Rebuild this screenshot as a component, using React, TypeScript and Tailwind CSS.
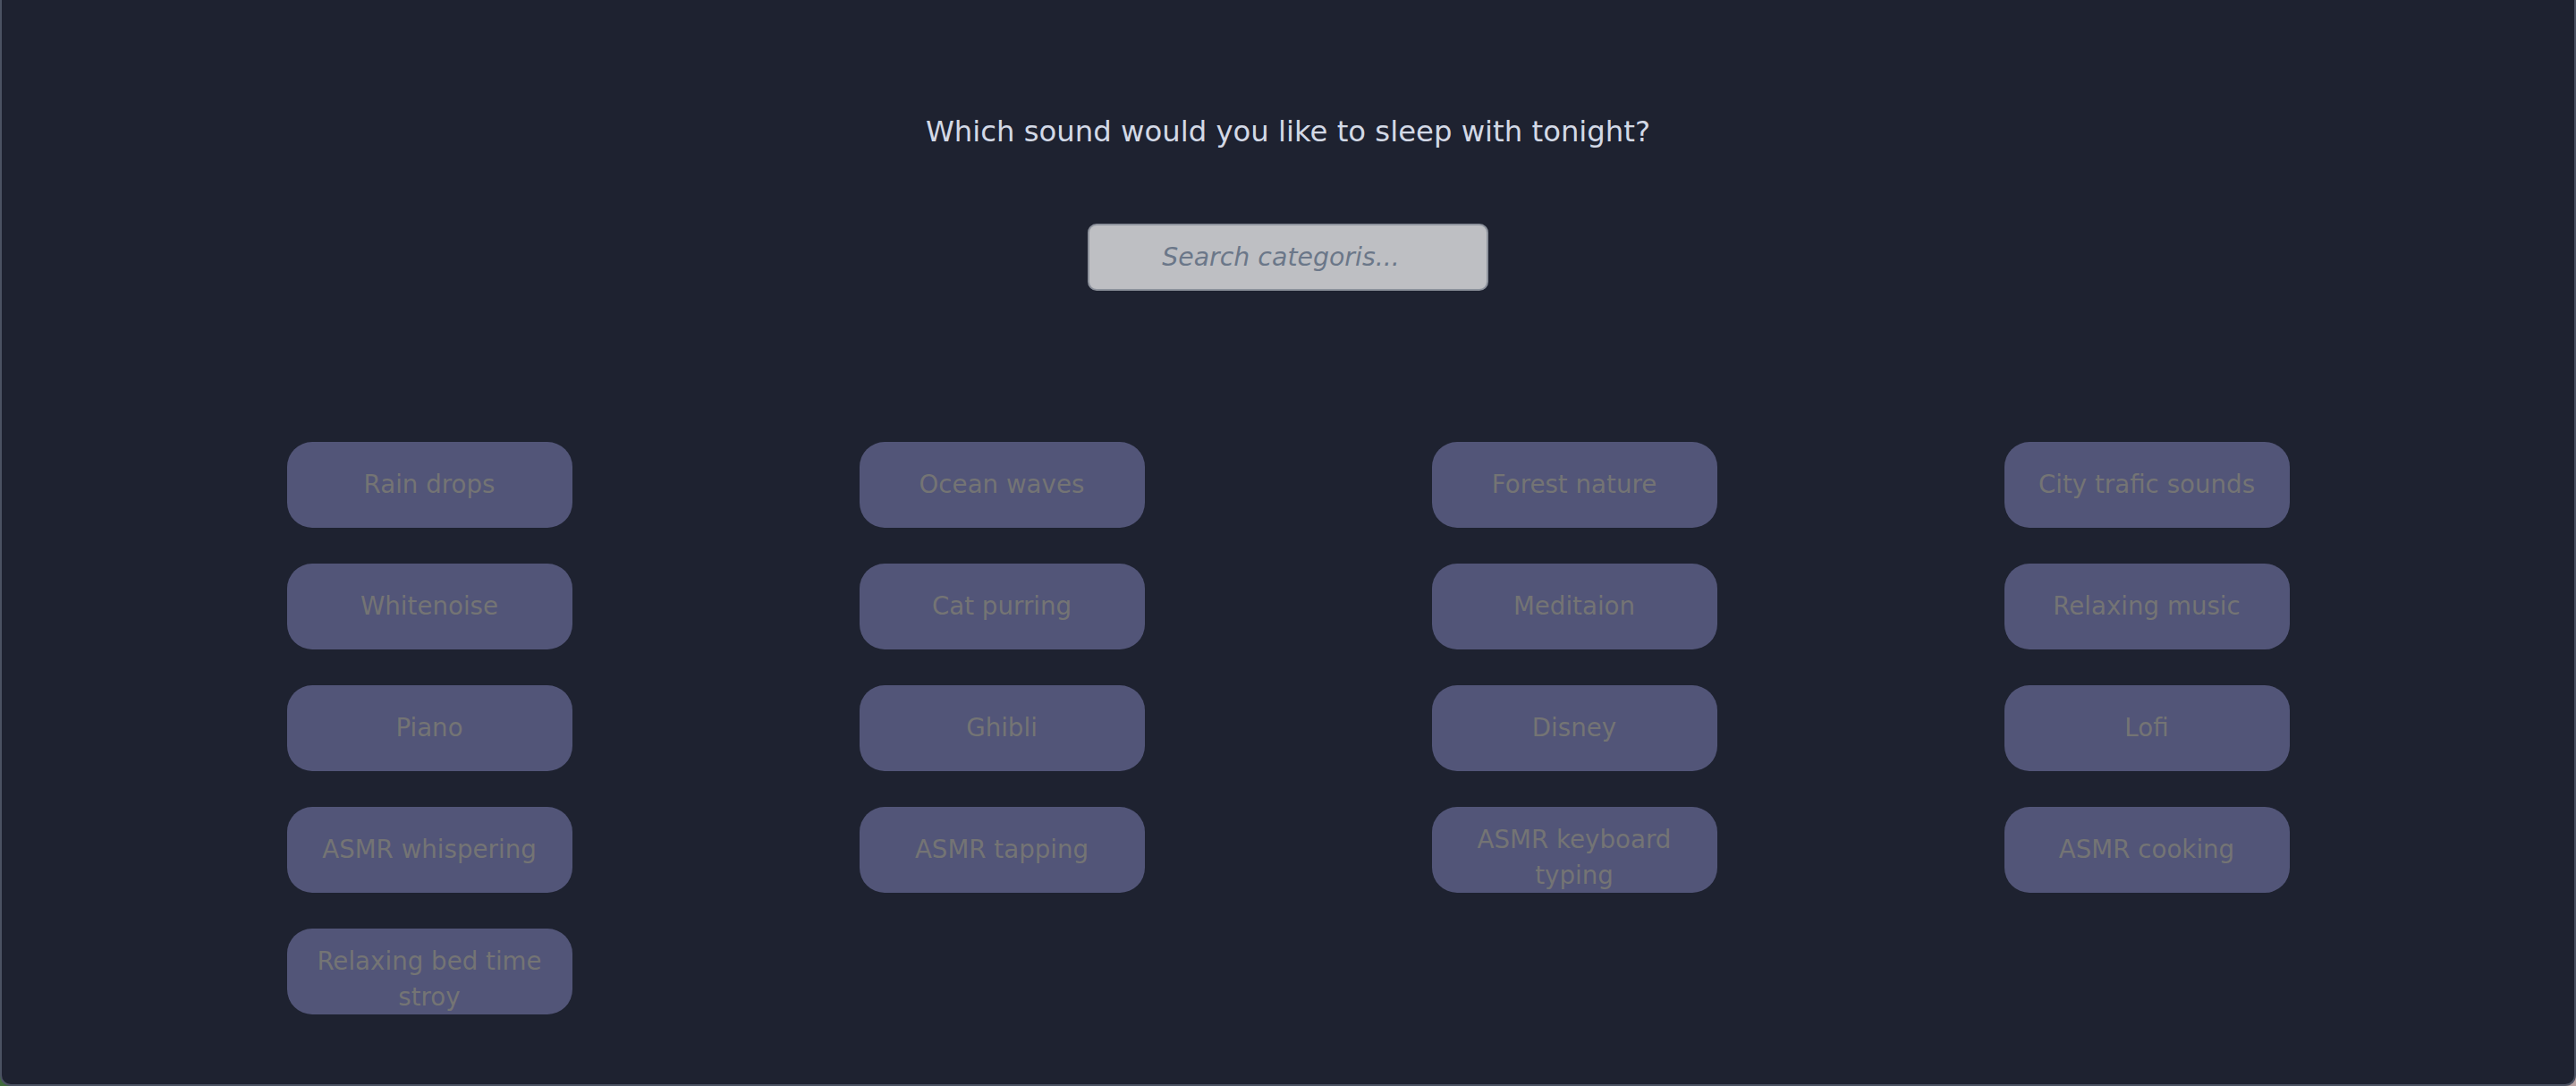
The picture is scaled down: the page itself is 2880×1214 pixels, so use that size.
import React from 'react';

const sounds = [
  'Rain drops',
  'Ocean waves',
  'Forest nature',
  'City trafic sounds',
  'Whitenoise',
  'Cat purring',
  'Meditaion',
  'Relaxing music',
  'Piano',
  'Ghibli',
  'Disney',
  'Lofi',
  'ASMR whispering',
  'ASMR tapping',
  'ASMR keyboard typing',
  'ASMR cooking',
  'Relaxing bed time stroy',
];

export default function App() {
  const [query, setQuery] = React.useState('');

  const filtered = sounds.filter((s) => s.toLowerCase().includes(query.toLowerCase()));

  return (
    <div className="h-screen w-full bg-gradient-to-r from-[#3f6b3a] to-[#b9a3a3] font-['DejaVu_Sans',Verdana,sans-serif]">
      <div className="h-full w-full rounded-b-[12px] border-2 border-t-0 border-[#4b5262] bg-[#1e2230] flex flex-col items-center">
        {/* heading */}
        <h1 className="mt-[127px] text-[32.3px] leading-[40px] text-[#d3d9e6] font-normal">
          Which sound would you like to sleep with tonight?
        </h1>

        {/* search */}
        <input
          type="text"
          value={query}
          onChange={(e) => setQuery(e.target.value)}
          placeholder="Search categoris..."
          className="mt-[83px] w-[448px] h-[75px] rounded-[10px] border-2 border-[#8d929c] bg-[#bebfc3] pr-[16px] text-center text-[28.4px] italic text-[#374151] placeholder:text-[#6b7789] outline-none"
        />

        {/* categories */}
        <div className="mt-[169px] w-full px-[158px] grid grid-cols-4 justify-items-center gap-y-[40px]">
          {filtered.map((name) => (
            <button
              key={name}
              className="w-[319px] h-[96px] rounded-[28px] bg-[#525578] px-[20px] py-[17px] flex flex-col items-center [justify-content:safe_center] text-center text-[27.7px] leading-[40px] text-[#747474] overflow-hidden"
            >
              {name}
            </button>
          ))}
        </div>
      </div>
    </div>
  );
}
